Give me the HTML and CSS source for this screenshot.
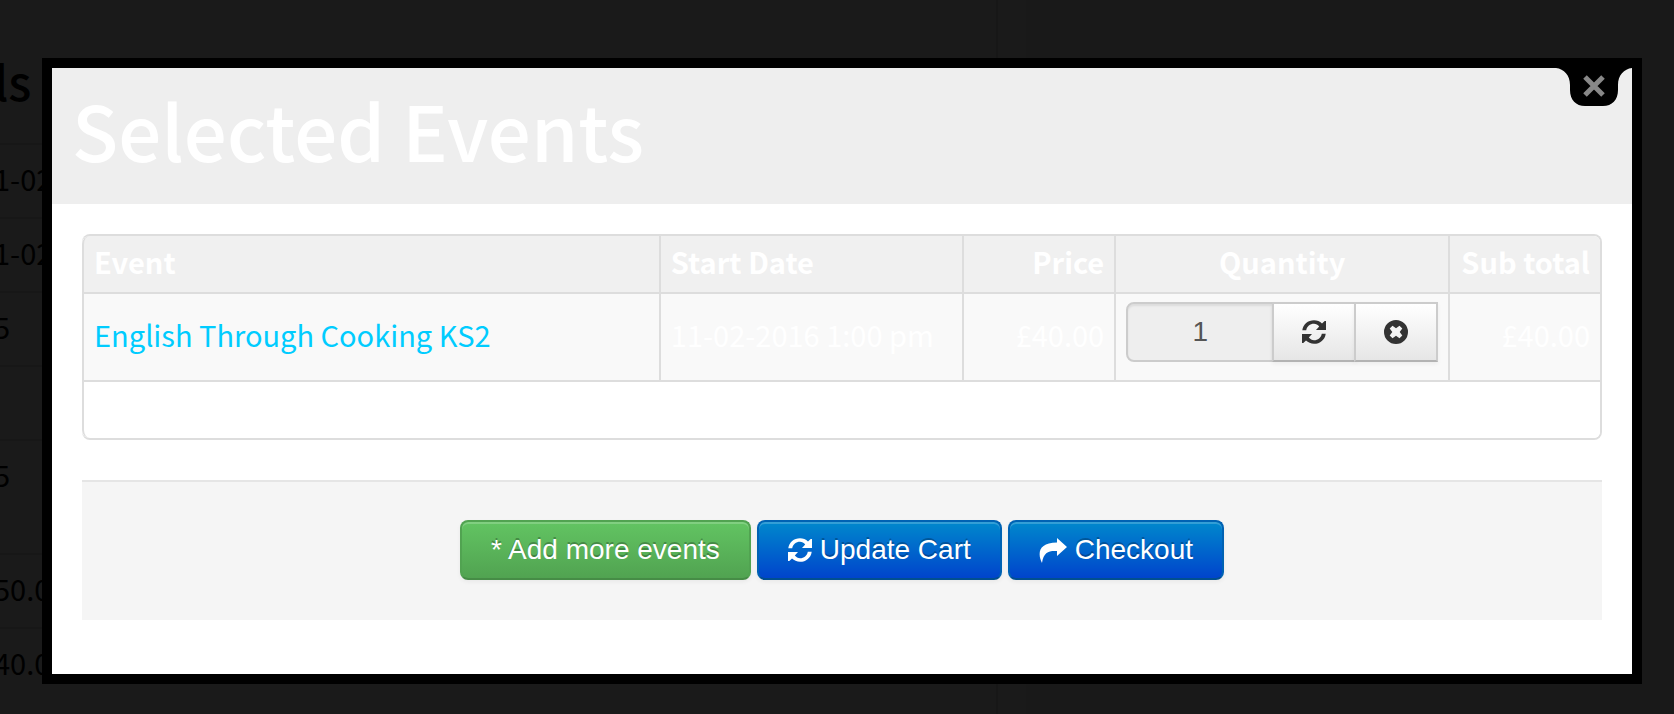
FILE: index.html
```html
<!DOCTYPE html>
<html lang="en">
<head>
  <meta charset="UTF-8">
  <meta name="viewport" content="width=device-width, initial-scale=1.0">
  <title>Selected Events</title>
  <link rel="stylesheet" href="styles.css">
</head>
<body>

<svg class="sprite" aria-hidden="true">
  <symbol id="icon-refresh" viewBox="0 0 24 24">
    <path d="M0.300 10.300C1 4.200 6 0.200 12 0.200c3.100 0 5.900 1.200 8 3.200L22.700 0.900H24V10H14L17.200 6.400C15.800 4.700 14 3.800 12 3.800C8 3.800 5 6.400 4.200 10.300z"/>
    <path d="M23.700 13.700C23 19.800 18 23.800 12 23.800c-3.100 0-5.900-1.200-8-3.200L1.300 23.100H0V14H10L6.800 17.600C8.200 19.300 10 20.200 12 20.200C16 20.200 19 17.600 19.800 13.700z"/>
  </symbol>
  <symbol id="icon-remove" viewBox="0 0 24 24">
    <path fill-rule="evenodd" d="M12 0a12 12 0 1 0 0 24a12 12 0 1 0 0-24zM8.500 5.700L12 8.300L15.500 5.700L18.300 8.500L15.700 12L18.300 15.500L15.500 18.300L12 15.700L8.500 18.300L5.700 15.500L8.300 12L5.700 8.500z"/>
  </symbol>
  <symbol id="icon-share" viewBox="0 0 28 25">
    <path d="M18 0L28 9L18 18V13C10 12.500 4.500 14 3 25C-2 15 0 4.500 18 4.500z"/>
  </symbol>
</svg>

<div class="page">
  <main class="page-main">
    <h2 class="page-title">ls</h2>
    <ul class="details">
      <li>1-02</li>
      <li>1-02</li>
      <li>5</li>
      <li></li>
      <li class="tall">5</li>
      <li>50.0</li>
      <li>40.0</li>
    </ul>
  </main>
  <aside class="page-side"></aside>
</div>

<div class="modal" role="dialog" aria-labelledby="modalTitle">
  <button class="modal-close" type="button" aria-label="Close">
    <svg viewBox="0 0 76 38">
      <path d="M0 0H76C68 1 62 7 62 17V22C62 32 56 38 47 38H29C20 38 14 32 14 22V17C14 7 8 1 0 0z"/>
      <path class="cross" d="M29 9L47 27M47 9L29 27"/>
    </svg>
  </button>

  <div class="modal-header">
    <h1 id="modalTitle">Selected Events</h1>
  </div>

  <form class="modal-body">
    <table class="cart">
      <colgroup>
        <col class="col-event">
        <col class="col-date">
        <col class="col-price">
        <col class="col-quantity">
        <col class="col-total">
      </colgroup>
      <thead>
        <tr>
          <th>Event</th>
          <th>Start Date</th>
          <th class="right">Price</th>
          <th class="center">Quantity</th>
          <th class="right">Sub total</th>
        </tr>
      </thead>
      <tbody>
        <tr>
          <td><a href="#">English Through Cooking KS2</a></td>
          <td>11-02-2016 1:00 pm</td>
          <td class="right">£40.00</td>
          <td class="quantity">
            <div class="input-append">
              <input type="text" value="1" aria-label="Quantity" readonly>
              <button class="btn" type="button" aria-label="Update"><svg class="icon"><use href="#icon-refresh"/></svg></button>
              <button class="btn" type="button" aria-label="Remove"><svg class="icon"><use href="#icon-remove"/></svg></button>
            </div>
          </td>
          <td class="right">£40.00</td>
        </tr>
        <tr class="empty">
          <td colspan="5">&nbsp;</td>
        </tr>
      </tbody>
    </table>

    <div class="form-actions">
      <button class="btn btn-success" type="button">* Add more events</button>
      <button class="btn btn-primary" type="button"><svg class="icon"><use href="#icon-refresh"/></svg>Update Cart</button>
      <button class="btn btn-primary" type="submit"><svg class="icon icon-wide"><use href="#icon-share"/></svg>Checkout</button>
    </div>
  </form>
</div>

</body>
</html>
```
FILE: styles.css
```css
* {
  box-sizing: border-box;
}
body {
  margin: 0;
  background: #1a1a1a;
  color: #000;
  font-family: "Noto Sans CJK SC", "Noto Sans", sans-serif;
  font-size: 29px;
  line-height: 40px;
}
.sprite {
  display: none;
}

/* dimmed page behind the dialog */
.page {
  display: flex;
  height: 100vh;
  overflow: hidden;
}
.page-main {
  width: 60%;
  padding-top: 40px;
  margin-left: -6px;
  border-right: 2px solid #171717;
}
.page-side {
  flex: 1;
  margin-left: 28px;
  background: #191919;
}
.page-title {
  margin: 0 0 23px;
  font-size: 48px;
  font-weight: 500;
  line-height: 80px;
}
.details {
  margin: 0;
  padding: 0;
  list-style: none;
}
.details li {
  height: 74px;
  padding: 13px 0;
  border-top: 2px solid #171717;
}
.details .tall {
  height: 114px;
}

/* dialog */
.modal {
  position: absolute;
  top: 58px;
  left: 42px;
  right: 32px;
  border: 10px solid #000;
  background: #fff;
  color: #fff;
}
.modal-close {
  position: absolute;
  top: 0;
  right: 0;
  width: 76px;
  height: 38px;
  padding: 0;
  border: 0;
  background: none;
  cursor: pointer;
}
.modal-close svg {
  display: block;
}
.modal-close .cross {
  stroke: #888;
  stroke-width: 5;
}
.modal-header {
  padding: 11px 20px 25px;
  background: #eee;
}
.modal-header h1 {
  margin: 0;
  font-size: 76px;
  font-weight: 500;
  line-height: 100px;
}
.modal-body {
  padding: 30px 30px 54px;
}

/* cart table */
.cart {
  width: 100%;
  margin-bottom: 40px;
  border: 2px solid #ddd;
  border-left: 0;
  border-radius: 8px;
  border-spacing: 0;
  table-layout: fixed;
}
.col-event {
  width: 38%;
}
.col-date {
  width: 20%;
}
.col-price,
.col-total {
  width: 10%;
}
.col-quantity {
  width: 22%;
}
.cart th,
.cart td {
  padding: 5px 10px 11px;
  border-left: 2px solid #ddd;
  text-align: left;
  white-space: nowrap;
}
.cart th {
  background: #f0f0f0;
  font-weight: 700;
}
.cart td {
  border-top: 2px solid #ddd;
  background: #f9f9f9;
}
.cart .quantity {
  padding: 8px 10px;
}
.cart .empty td {
  background: #fff;
  border-bottom-left-radius: 8px;
  border-bottom-right-radius: 6px;
}
.cart th:first-child {
  border-top-left-radius: 8px;
}
.cart th:last-child {
  border-top-right-radius: 6px;
}
.cart .right {
  text-align: right;
}
.cart .center {
  text-align: center;
}
.cart a {
  color: #00ccff;
  text-decoration: none;
}
.input-append {
  display: flex;
  margin-bottom: 10px;
}
.input-append input {
  flex: 1;
  min-width: 0;
  height: 60px;
  border: 2px solid #ccc;
  border-radius: 8px 0 0 8px;
  background: #eee;
  box-shadow: inset 0 2px 2px rgba(0, 0, 0, 0.075);
  color: #555;
  font: 28px/40px "Liberation Sans", Arial, sans-serif;
  text-align: center;
}

/* buttons */
.btn {
  display: inline-flex;
  align-items: center;
  gap: 8px;
  padding: 8px 28px;
  border: 2px solid;
  border-color: #ccc #ccc #b3b3b3;
  border-radius: 8px;
  background: linear-gradient(#fff, #e6e6e6);
  box-shadow: inset 0 2px 0 rgba(255, 255, 255, 0.2), 0 2px 4px rgba(0, 0, 0, 0.05);
  color: #333;
  font: 28px/40px "Liberation Sans", Arial, sans-serif;
  white-space: nowrap;
  cursor: pointer;
}
.input-append .btn {
  margin-left: -2px;
  border-radius: 0;
}
.form-actions .btn {
  padding: 8px 29px;
}
.btn-success {
  border-color: #51a351 #51a351 #468c46;
  background: linear-gradient(#62c462, #51a351);
  color: #fff;
  text-shadow: 0 -2px 0 rgba(0, 0, 0, 0.25);
}
.btn-primary {
  border-color: #0062b3 #0062b3 #004f90;
  background: linear-gradient(#0088cc, #0044cc);
  color: #fff;
  text-shadow: 0 -2px 0 rgba(0, 0, 0, 0.25);
}
.icon {
  width: 24px;
  height: 24px;
  fill: currentColor;
}
.icon-wide {
  width: 28px;
  height: 25px;
}
.form-actions {
  display: flex;
  flex-wrap: wrap;
  justify-content: center;
  gap: 6px;
  padding: 38px 40px 40px;
  border-top: 2px solid #e5e5e5;
  background: #f5f5f5;
}
```
